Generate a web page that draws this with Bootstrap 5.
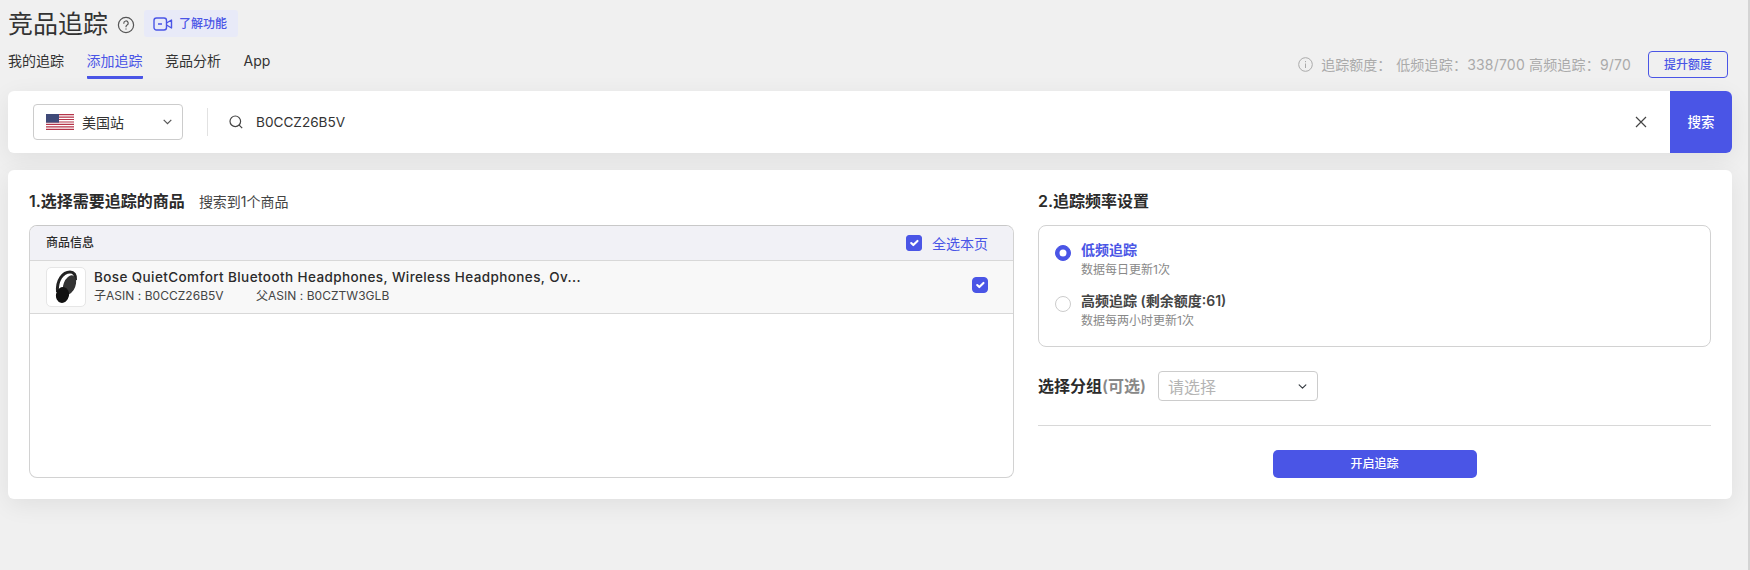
<!DOCTYPE html>
<html lang="zh-CN">
  <head>
    <meta charset="UTF-8" />
    <title>竞品追踪</title>
    <link href="https://cdn.jsdelivr.net/npm/bootstrap@5.3.3/dist/css/bootstrap.min.css" rel="stylesheet" />
    <style>
      html, body { height: 100%; overflow: hidden; }
      body {
        background: #f0f0f0;
        font-family: Inter, "Noto Sans CJK SC", sans-serif;
        color: #2b2b2b;
        padding: 0 16px 0 8px;
        border-right: 2px solid #d4d4d4;
      }
      .page-head { height: 48px; gap: 9px; padding-top: 10px; align-items: flex-start; }
      .page-title { font-size: 25px; line-height: 28px; font-weight: 400; margin: 0; color: #333; }
      .help-icon { margin-top: 6px; }
      .learn-btn {
        height: 27px; width: 94px; background: #e8eaf8; color: #4a55e6; border: 0; border-radius: 3px;
        font-size: 12px; font-weight: 500; gap: 6px; padding: 0 0 0 9px;
      }
      .tab-row { height: 43px; }
      .tab-link { font-size: 14px; color: #333; padding: 0; margin-right: 22.5px; height: 31px; line-height: 25px; text-decoration: none; }
      .tab-link.on { color: #4a55e6; border-bottom: 3px solid #4a55e6; border-radius: 1px; }
      .quota { font-size: 14px; color: #aaa; height: 27px; margin-top: 3px; margin-right: 4px; }
      .quota-gap { margin-left: 5px; }
      .quota-num { letter-spacing: .2px; }
      .quota-btn {
        width: 80px; height: 27px; margin-left: 17px; padding: 0; font-size: 12px; font-weight: 500;
        color: #4a55e6; border: 1px solid #4a55e6; border-radius: 4px; background: transparent;
      }
      .search-bar { height: 62px; border-radius: 6px; box-shadow: 0 6px 24px rgba(0,0,0,.07); padding-left: 25px; }
      .site-pick {
        width: 150px; flex: none; height: 36px; border: 1px solid #ccc; border-radius: 4px; padding: 0 10px 0 12px;
        font-size: 14px; color: #333; gap: 8px;
      }
      .bar-split { width: 1px; height: 28px; flex: none; background: #e2e2e2; margin: 0 21px 0 24px; }
      .search-icon { flex: none; }
      .search-text { font-size: 13.6px; color: #333; padding: 0 0 0 13px; box-shadow: none !important; }
      .clear-x { margin-right: 23px; flex: none; }
      .search-btn {
        width: 62px; flex: none; height: 62px; padding: 0; border: 0; color: #fff; background: #4a55e6;
        border-radius: 0 6px 6px 0; font-size: 13.5px; font-weight: 500;
      }
      .main-box {
        margin-top: 17px; height: 329px; border-radius: 6px; padding: 20px 21px 21px;
        gap: 24px; box-shadow: 0 6px 24px rgba(0,0,0,.07);
      }
      .left-side { width: 985px; flex: none; }
      .sec-title { font-size: 16px; font-weight: 600; line-height: 22px; height: 35px; margin: 0; color: #2b2b2b; }
      .sec-note { font-size: 14px; font-weight: 400; margin-left: 14px; color: #444; }
      .goods-box { height: 253px; border: 1px solid #d2d2d2; border-top-color: #c8c8c8; border-radius: 8px; overflow: hidden; }
      .goods-head { height: 35px; background: #f1f1f6; border-bottom: 1px solid #d8d8d8; padding: 0 25px 0 16px; font-size: 12px; font-weight: 500; }
      .all-label { font-size: 14px; font-weight: 400; color: #4a55e6; margin-left: 10px; }
      .goods-row { height: 53px; background: #f8f8f8; border-bottom: 1px solid #d8d8d8; padding: 0 25px 0 16px; }
      .thumb { width: 40px; height: 40px; border: 1px solid #e6e6e6; border-radius: 5px; background: #fff; margin-right: 8px; flex: none; }
      .goods-text { padding-bottom: 2px; }
      .goods-name { font-size: 13.5px; font-weight: 500; line-height: 18px; letter-spacing: .4px; color: #2b2b2b; }
      .goods-meta { font-size: 12px; line-height: 16px; color: #444; margin-top: 2px; letter-spacing: .03px; }
      .asin-a { width: 162px; display: inline-block; }
      .tick { width: 16px; height: 16px; margin: 0; border-radius: 3px; flex: none; }
      .tick:checked, .pick:checked { background-color: #4a55e6; border-color: #4a55e6; }
      .goods-row .tick { margin-bottom: 4px; }
      .freq-box { height: 122px; border: 1px solid #d2d2d2; border-radius: 8px; padding: 15px 16px; }
      .pick { width: 16px; height: 16px; margin: 0; flex: none; border-color: #ccc; }
      .freq-item { gap: 10px; }
      .freq-item + .freq-item { margin-top: 14px; }
      .freq-name { font-size: 14px; font-weight: 600; line-height: 18px; color: #444; }
      .freq-name.on { color: #4a55e6; }
      .freq-desc { font-size: 12px; line-height: 16px; color: #888; margin-top: 3px; }
      .group-row { margin-top: 24px; height: 30px; }
      .group-label { font-size: 16px; font-weight: 600; width: 120px; margin: 0; color: #2b2b2b; white-space: nowrap; }
      .group-label span { color: #888; }
      .group-pick {
        width: 160px; height: 30px; padding: 2px 24px 0 9px; font-size: 16px; color: #b4b4b4;
        border: 1px solid #ccc; border-radius: 4px; background-position: right 9px center; background-size: 11px 9px; box-shadow: none !important;
      }
      .side-line { margin: 24px 0 0; height: 1px; border: 0; background: #d8d8d8; opacity: 1; }
      .start-btn {
        width: 204px; height: 28px; padding: 0; margin-top: 24px; border: 0; border-radius: 5px;
        background: #4a55e6; color: #fff; font-size: 12px; font-weight: 500;
      }
    </style>
  </head>
  <body>
    <div class="d-flex page-head">
      <h1 class="page-title">竞品追踪</h1>
      <svg class="help-icon" width="18" height="18" viewBox="0 0 18 18" fill="none" stroke="#555" stroke-width="1.2">
        <circle cx="9" cy="9" r="7.6" />
        <path d="M6.8 7.2a2.2 2.2 0 1 1 3.3 1.9c-.7.4-1.1.8-1.1 1.6" stroke-linecap="round" />
        <path d="M9 12.5v1" />
      </svg>
      <button class="btn learn-btn d-flex align-items-center" type="button">
        <svg width="20" height="16" viewBox="0 0 20 16" fill="none" stroke="#4a55e6" stroke-width="1.4">
          <rect x="1" y="2" width="12.5" height="12" rx="2.5" />
          <path d="M13.5 7l5-3v8l-5-3M5 8h4" stroke-linejoin="round" />
        </svg>
        了解功能
      </button>
    </div>

    <div class="d-flex align-items-start justify-content-between tab-row">
      <nav class="d-flex">
        <a class="tab-link" href="#">我的追踪</a>
        <a class="tab-link on" href="#">添加追踪</a>
        <a class="tab-link" href="#">竞品分析</a>
        <a class="tab-link" href="#">App</a>
      </nav>
      <div class="d-flex align-items-center quota">
        <svg class="me-2" width="15" height="15" viewBox="0 0 15 15" fill="none" stroke="#aaa" stroke-width="1">
          <circle cx="7.5" cy="7.5" r="6.8" />
          <path d="M7.5 6.5v4.5M7.5 4v1.2" />
        </svg>
        <span>追踪额度：</span>
        <span class="quota-gap quota-num">低频追踪：338/700</span>
        <span class="ms-1 quota-num">高频追踪：9/70</span>
        <button class="btn quota-btn" type="button">提升额度</button>
      </div>
    </div>

    <div class="d-flex align-items-center bg-white search-bar">
      <div class="d-flex align-items-center site-pick">
        <svg width="28" height="16" viewBox="0 0 28 16">
          <rect width="28" height="16" fill="#fff" />
          <path d="M0 0h28v1.2H0zM0 2.5h28v1.2H0zM0 4.9h28v1.2H0zM0 7.4h28v1.2H0zM0 9.8h28v1.2H0zM0 12.3h28v1.2H0zM0 14.8h28V16H0z" fill="#b5354a" />
          <rect width="13" height="8.6" fill="#3f4a78" />
        </svg>
        <span class="flex-grow-1">美国站</span>
        <svg width="9" height="6" viewBox="0 0 9 6" fill="none" stroke="#555" stroke-width="1.2"><path d="M.7.8l3.8 3.8L8.3.8" /></svg>
      </div>
      <div class="bar-split"></div>
      <svg class="search-icon" width="14" height="14" viewBox="0 0 14 14" fill="none" stroke="#444" stroke-width="1.2">
        <circle cx="6.3" cy="6.3" r="5.3" />
        <path d="M10.2 10.2L13.2 13.2" />
      </svg>
      <input class="form-control border-0 search-text" type="text" value="B0CCZ26B5V" />
      <svg class="clear-x" width="12" height="12" viewBox="0 0 12 12" fill="none" stroke="#444" stroke-width="1.2"><path d="M1 1l10 10M11 1L1 11" /></svg>
      <button class="btn search-btn" type="button">搜索</button>
    </div>

    <div class="d-flex bg-white main-box">
      <div class="left-side">
        <h2 class="sec-title">1.选择需要追踪的商品<span class="sec-note">搜索到1个商品</span></h2>
        <div class="goods-box">
          <div class="d-flex align-items-center justify-content-between goods-head">
            <span>商品信息</span>
            <div class="d-flex align-items-center">
              <input class="form-check-input tick" type="checkbox" checked />
              <span class="all-label">全选本页</span>
            </div>
          </div>
          <div class="d-flex align-items-center goods-row">
            <div class="d-flex align-items-center justify-content-center thumb">
              <svg width="24" height="34" viewBox="0 0 24 34">
                <path d="M3.5 22C2.5 10 9 2 16 2c4 0 6 3 5.5 8" fill="none" stroke="#222" stroke-width="3" />
                <ellipse cx="15.5" cy="15" rx="6" ry="10" transform="rotate(20 15.5 15)" fill="#333" />
                <ellipse cx="8.5" cy="25" rx="6.5" ry="8" transform="rotate(12 8.5 25)" fill="#111" />
              </svg>
            </div>
            <div class="flex-grow-1 goods-text">
              <div class="goods-name">Bose QuietComfort Bluetooth Headphones, Wireless Headphones, Ov...</div>
              <div class="goods-meta"><span class="asin-a">子ASIN : B0CCZ26B5V</span><span>父ASIN : B0CZTW3GLB</span></div>
            </div>
            <input class="form-check-input tick" type="checkbox" checked />
          </div>
        </div>
      </div>

      <div class="flex-grow-1">
        <h2 class="sec-title">2.追踪频率设置</h2>
        <div class="freq-box">
          <div class="d-flex freq-item">
            <input class="form-check-input pick mt-1" type="radio" name="freq" checked />
            <div>
              <div class="freq-name on">低频追踪</div>
              <div class="freq-desc">数据每日更新1次</div>
            </div>
          </div>
          <div class="d-flex freq-item">
            <input class="form-check-input pick mt-1" type="radio" name="freq" />
            <div>
              <div class="freq-name">高频追踪 (剩余额度:61)</div>
              <div class="freq-desc">数据每两小时更新1次</div>
            </div>
          </div>
        </div>
        <div class="d-flex align-items-center group-row">
          <label class="group-label">选择分组<span>(可选)</span></label>
          <select class="form-select group-pick"><option>请选择</option></select>
        </div>
        <hr class="side-line" />
        <div class="d-flex justify-content-center">
          <button class="btn start-btn" type="button">开启追踪</button>
        </div>
      </div>
    </div>

    <script src="https://cdn.jsdelivr.net/npm/bootstrap@5.3.3/dist/js/bootstrap.bundle.min.js"></script>
  </body>
</html>
